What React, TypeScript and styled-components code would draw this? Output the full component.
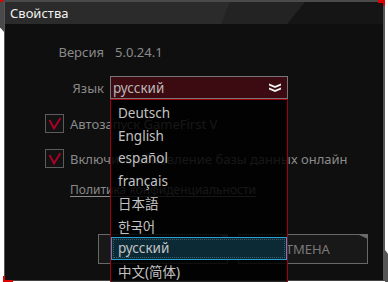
import React from "react";
import styled, { createGlobalStyle } from "styled-components";

const Global = createGlobalStyle`
  html, body { margin: 0; padding: 0; background: #ffffff; }
  body { font-family: "Noto Sans", "Noto Sans CJK SC", sans-serif; }
  * { box-sizing: border-box; }
`;

const Stage = styled.div`
  position: relative;
  width: 388px;
  height: 282px;
  overflow: hidden;
`;

const Deco = styled.div<{ $l: number; $t: number; $w: number; $h: number; $c: string; $clip?: string }>`
  position: absolute;
  left: ${(p) => p.$l}px;
  top: ${(p) => p.$t}px;
  width: ${(p) => p.$w}px;
  height: ${(p) => p.$h}px;
  background: ${(p) => p.$c};
  clip-path: ${(p) => p.$clip || "none"};
  z-index: 3;
`;

const Window = styled.div`
  position: absolute;
  left: 4px;
  top: 2px;
  width: 381px;
  height: 279px;
  background: #0f0f0f;
  border-left: 1px solid #555;
  border-right: 2px solid #555;
  border-bottom: 1px solid #444;
  display: flex;
  flex-direction: column;
`;

const TitleBar = styled.div`
  position: relative;
  height: 22px;
  display: flex;
  align-items: center;
  padding-left: 5px;
  color: #f0f0f0;
  font-size: 13px;
  background: #151515;
  &::before {
    content: "";
    position: absolute;
    inset: 0;
    background: #232323;
    clip-path: polygon(0 0, 300px 0, 282px 100%, 0 100%);
  }
  &::after {
    content: "";
    position: absolute;
    inset: 0;
    background: #2b2b2b;
    clip-path: polygon(0 0, 225px 0, 216px 100%, 0 100%);
  }
`;

const TitleText = styled.span`
  position: relative;
  z-index: 1;
`;

const Content = styled.div`
  position: relative;
  flex: 1;
  display: flex;
  flex-direction: column;
  padding-top: 16px;
`;

const FieldRow = styled.div<{ $mt?: number }>`
  display: flex;
  align-items: center;
  height: 23px;
  margin-top: ${(p) => p.$mt || 0}px;
`;

const Label = styled.div`
  width: 105px;
  text-align: right;
  color: #8a8a8a;
  font-size: 13px;
  padding-right: 6px;
`;

const Value = styled.div`
  color: #8a8a8a;
  font-size: 13px;
  padding-left: 5px;
`;

const SelectWrap = styled.div`
  position: relative;
  width: 178px;
`;

const SelectBox = styled.div`
  height: 23px;
  background: #3c0a11;
  border: 1px solid #777;
  display: flex;
  align-items: center;
  justify-content: space-between;
  padding: 0 6px 0 2px;
  color: #b8b8b8;
  font-size: 13.5px;
`;

const DropList = styled.div`
  position: absolute;
  left: 0;
  top: 23px;
  width: 178px;
  height: 190px;
  background: rgba(0, 0, 0, 0.84);
  border: 1px solid #a00010;
  border-bottom: none;
  z-index: 5;
  padding-top: 2px;
`;

const Option = styled.div<{ $sel?: boolean }>`
  position: relative;
  height: 22.5px;
  display: flex;
  align-items: center;
  padding-left: 6px;
  color: #c2c2c2;
  font-size: 13.5px;
  background: ${(p) => (p.$sel ? "#0c2a36" : "transparent")};
  border: 1px solid ${(p) => (p.$sel ? "#2a9fd6" : "transparent")};
  &::after {
    content: "";
    position: absolute;
    inset: 1px;
    border: 1px dotted ${(p) => (p.$sel ? "#3a5a66" : "transparent")};
  }
`;

const CheckRow = styled.div<{ $mt: number }>`
  display: flex;
  align-items: center;
  gap: 6px;
  margin-left: 40px;
  margin-top: ${(p) => p.$mt}px;
  color: #8a8a8a;
  font-size: 13px;
  white-space: nowrap;
`;

const Box = styled.div`
  width: 19px;
  height: 19px;
  border: 1px solid #5c5c5c;
  background: #121212;
  display: flex;
  align-items: center;
  justify-content: center;
`;

const Policy = styled.a`
  margin-left: 65px;
  margin-top: 13px;
  color: #8a8a8a;
  font-size: 12px;
  text-decoration: underline;
  text-underline-offset: 2px;
`;

const Buttons = styled.div`
  display: flex;
  gap: 10px;
  margin-left: 93px;
  margin-top: 36px;
`;

const Btn = styled.div`
  position: relative;
  width: 130px;
  height: 30px;
  border: 1px solid #686868;
  background: #181818;
  color: #7a7a7a;
  font-size: 13px;
  display: flex;
  align-items: center;
  justify-content: center;
  &::after {
    content: "";
    position: absolute;
    right: -1px;
    top: -1px;
    width: 11px;
    height: 5px;
    background: #6a6a6a;
    clip-path: polygon(0 0, 100% 0, 100% 100%);
  }
`;

const Check = () => (
  <svg width="14" height="14" viewBox="0 0 14 14">
    <path d="M1.5 3 L6 11.5 L12.5 1" fill="none" stroke="#b3002a" strokeWidth="1.8" />
  </svg>
);

const Chevrons = () => (
  <svg width="12" height="9" viewBox="0 0 12 9">
    <path d="M0 0.5 L6 3 L12 0.5 L12 2.5 L6 5 L0 2.5 Z" fill="#f2f2f2" />
    <path d="M0 4.5 L6 7 L12 4.5 L12 6.5 L6 9 L0 6.5 Z" fill="#f2f2f2" />
  </svg>
);

const langs = ["Deutsch", "English", "español", "français", "日本語", "한국어", "русский", "中文(简体)"];

export default function App() {
  return (
    <Stage>
      <Global />
      <Window>
        <TitleBar>
          <TitleText>Свойства</TitleText>
        </TitleBar>
        <Content>
          <FieldRow>
            <Label>Версия</Label>
            <Value>5.0.24.1</Value>
          </FieldRow>
          <FieldRow $mt={13}>
            <Label>Язык</Label>
            <SelectWrap>
              <SelectBox>
                <span>русский</span>
                <Chevrons />
              </SelectBox>
              <DropList>
                {langs.map((l) => (
                  <Option key={l} $sel={l === "русский"}>
                    {l}
                  </Option>
                ))}
              </DropList>
            </SelectWrap>
          </FieldRow>
          <CheckRow $mt={15}>
            <Box>
              <Check />
            </Box>
            <span>Автозапуск GameFirst V</span>
          </CheckRow>
          <CheckRow $mt={16}>
            <Box>
              <Check />
            </Box>
            <span>Включить обновление базы данных онлайн</span>
          </CheckRow>
          <Policy>Политика конфиденциальности</Policy>
          <Buttons>
            <Btn>СОХРАНИТЬ</Btn>
            <Btn>ОТМЕНА</Btn>
          </Buttons>
        </Content>
      </Window>
      <Deco $l={0} $t={0} $w={385} $h={2} $c="#4a4a4a" />
      <Deco $l={0} $t={0} $w={4} $h={32} $c="#4a4a4a" $clip="polygon(0 0, 100% 0, 100% 100%, 0 85%)" />
      <Deco $l={0} $t={0} $w={3} $h={2} $c="#e00000" />
      <Deco $l={378} $t={0} $w={7} $h={3} $c="#e00000" />
      <Deco $l={383} $t={0} $w={2} $h={6} $c="#e00000" />
      <Deco $l={385} $t={250} $w={3} $h={32} $c="#555" $clip="polygon(0 0, 100% 12%, 100% 100%, 0 100%)" />
      <Deco $l={3} $t={276} $w={2} $h={6} $c="#e00000" />
      <Deco $l={3} $t={280} $w={10} $h={2} $c="#e00000" />
    </Stage>
  );
}
